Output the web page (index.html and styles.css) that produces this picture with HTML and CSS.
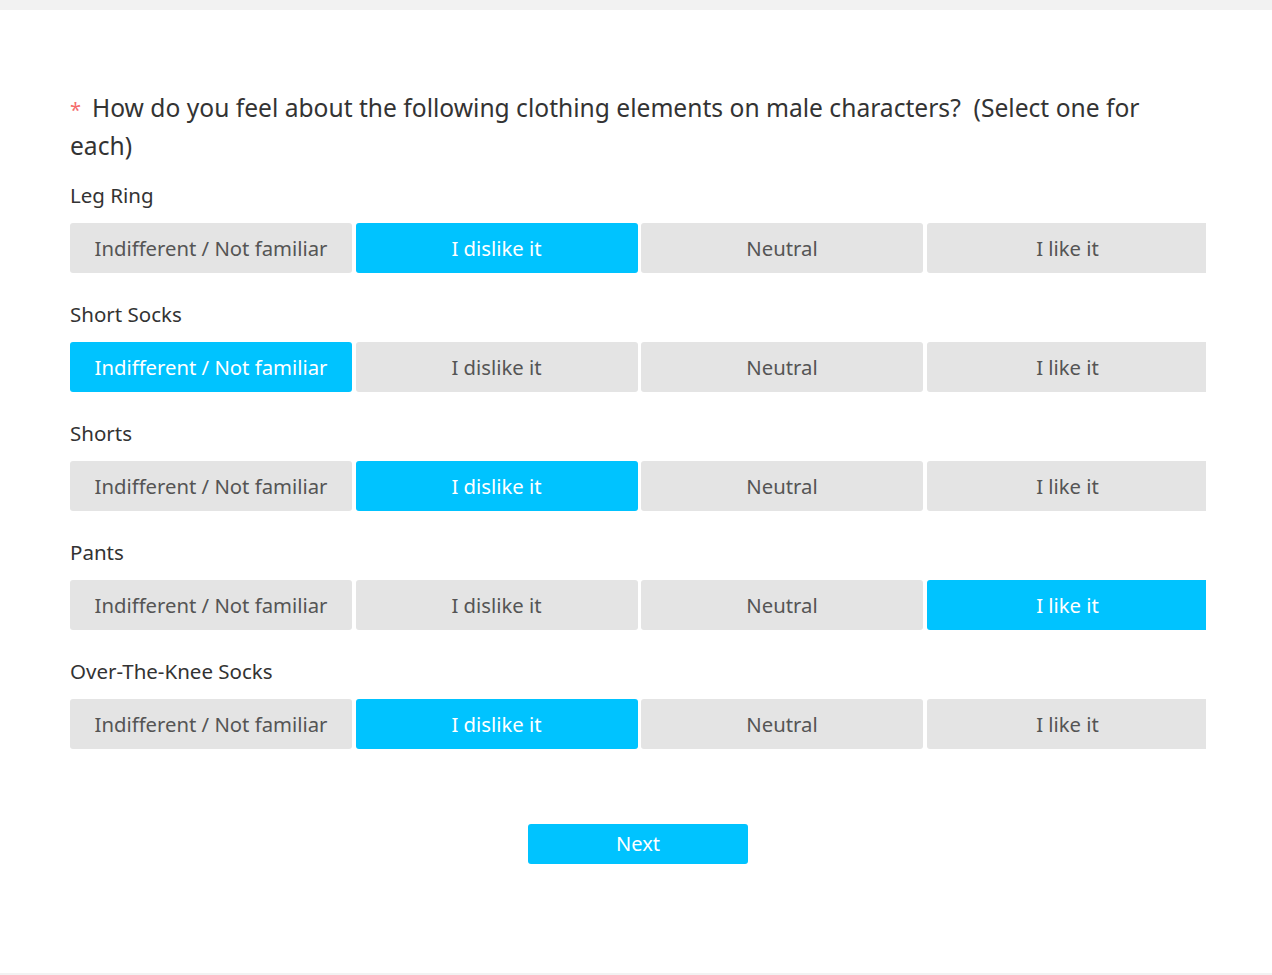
FILE: index.html
```html
<!DOCTYPE html>
<html lang="en">
<head>
<meta charset="utf-8">
<title>Survey</title>
<link rel="stylesheet" href="styles.css">
</head>
<body>
<div class="panel">
  <div class="content">
    <div class="title"><span class="req">*</span><span class="qtext">How do you feel about the following clothing elements on male characters?&nbsp; (Select one for each)</span></div>

    <div class="item">
      <div class="label">Leg Ring</div>
      <div class="options">
        <div class="opt">Indifferent / Not familiar</div>
        <div class="opt on">I dislike it</div>
        <div class="opt">Neutral</div>
        <div class="opt">I like it</div>
      </div>
    </div>

    <div class="item">
      <div class="label">Short Socks</div>
      <div class="options">
        <div class="opt on">Indifferent / Not familiar</div>
        <div class="opt">I dislike it</div>
        <div class="opt">Neutral</div>
        <div class="opt">I like it</div>
      </div>
    </div>

    <div class="item">
      <div class="label">Shorts</div>
      <div class="options">
        <div class="opt">Indifferent / Not familiar</div>
        <div class="opt on">I dislike it</div>
        <div class="opt">Neutral</div>
        <div class="opt">I like it</div>
      </div>
    </div>

    <div class="item">
      <div class="label">Pants</div>
      <div class="options">
        <div class="opt">Indifferent / Not familiar</div>
        <div class="opt">I dislike it</div>
        <div class="opt">Neutral</div>
        <div class="opt on">I like it</div>
      </div>
    </div>

    <div class="item">
      <div class="label">Over-The-Knee Socks</div>
      <div class="options">
        <div class="opt">Indifferent / Not familiar</div>
        <div class="opt on">I dislike it</div>
        <div class="opt">Neutral</div>
        <div class="opt">I like it</div>
      </div>
    </div>

    <div class="actions">
      <div class="next">Next</div>
    </div>
  </div>
</div>
</body>
</html>
```

FILE: styles.css
```css
html, body {
  margin: 0;
  padding: 0;
  background: #f2f2f2;
}
body {
  font-family: "Noto Sans", "Open Sans", sans-serif;
  color: #333;
  padding-top: 10px;
  padding-bottom: 2px;
}
.panel {
  background: #fff;
  height: 963px;
  box-sizing: border-box;
  padding-top: 79px;
}
.content {
  margin-left: 70px;
  width: 1136px;
}
.title {
  font-size: 24.6px;
  line-height: 38px;
  color: #333;
}
.req {
  display: inline-block;
  color: #f56c6c;
  font-size: 20px;
  line-height: 20px;
  width: 22px;
}
.item {
  margin-top: 16px;
}
.item + .item {
  margin-top: 27px;
}
.label {
  font-size: 20.5px;
  line-height: 28px;
  color: #333;
}
.options {
  margin-top: 14px;
  display: flex;
  gap: 3.5px;
  overflow: hidden;
}
.opt {
  flex: 0 0 282px;
  height: 50px;
  line-height: 50px;
  text-align: center;
  background: #e4e4e4;
  color: #555;
  font-size: 20.3px;
  border-radius: 3px;
}
.opt.on {
  background: #00c3ff;
  color: #fff;
}
.actions {
  display: flex;
  justify-content: center;
  margin-top: 75px;
}
.next {
  width: 220px;
  height: 40px;
  line-height: 40px;
  text-align: center;
  background: #00c3ff;
  color: #fff;
  font-size: 20px;
  border-radius: 3px;
}
```
